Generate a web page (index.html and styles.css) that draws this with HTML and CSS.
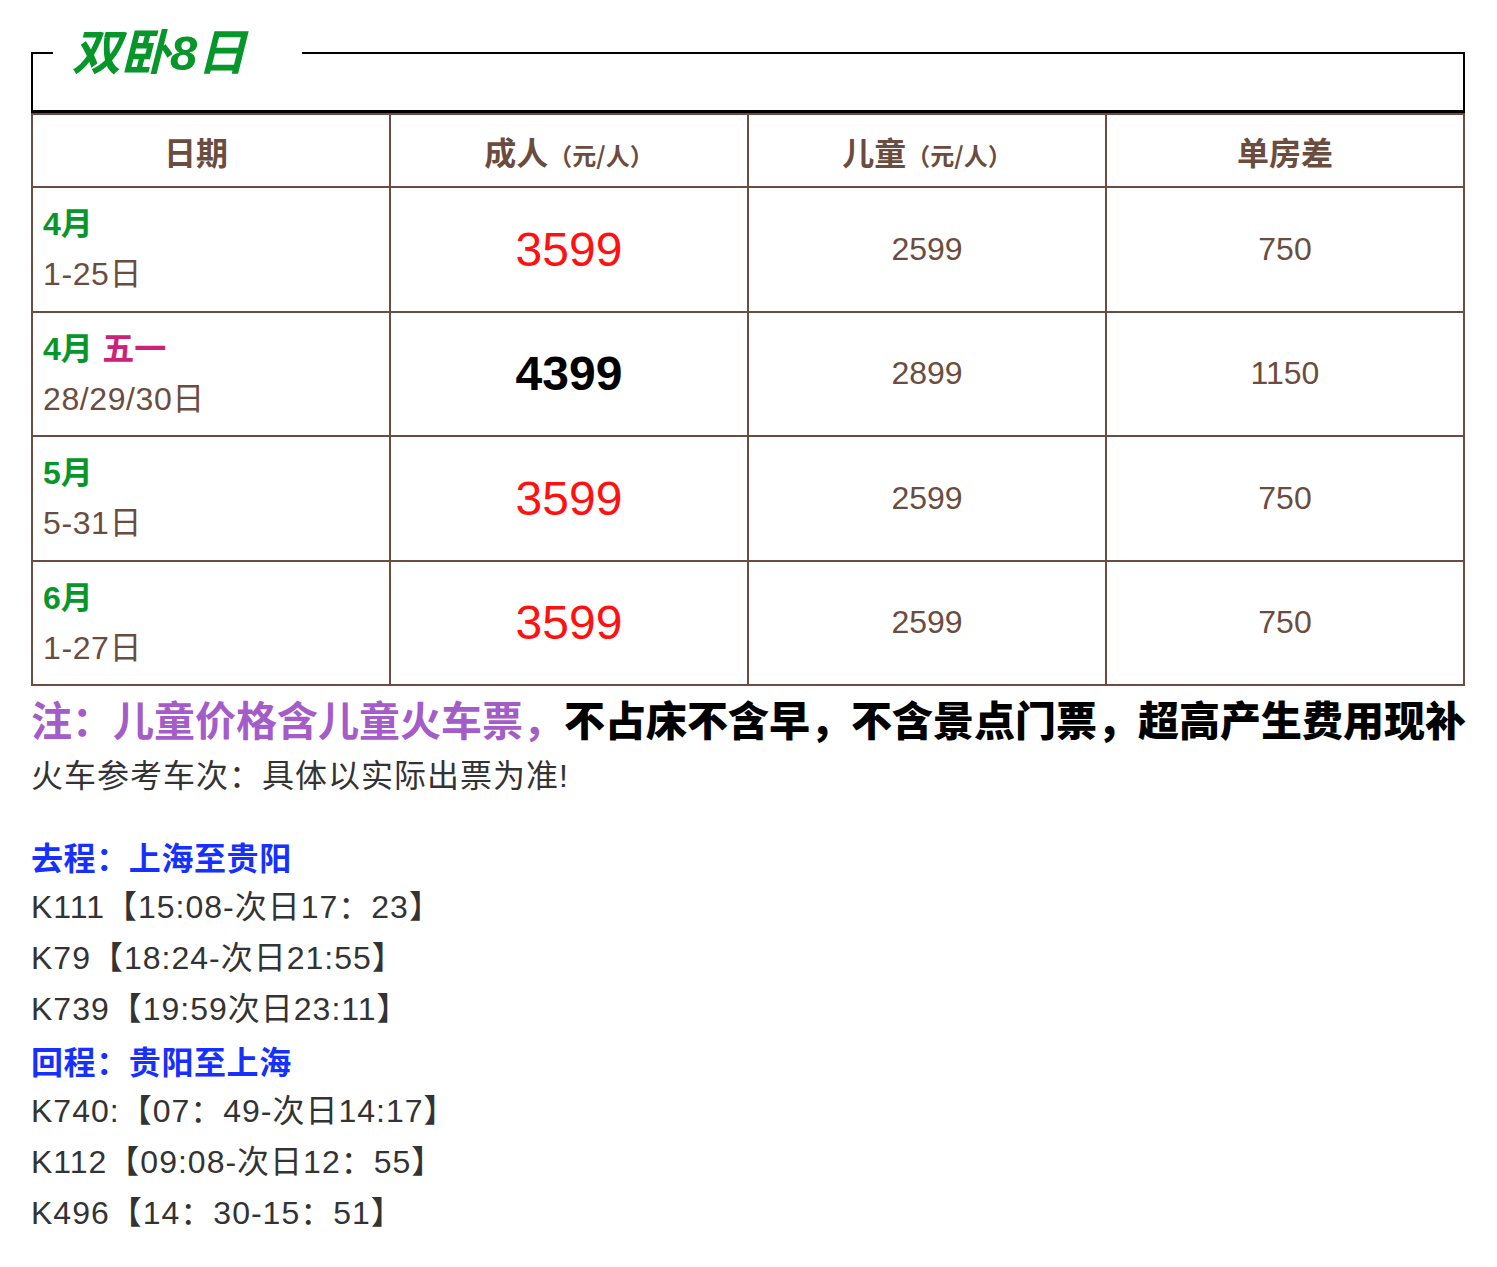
FILE: index.html
```html
<!DOCTYPE html>
<html lang="zh-CN">
<head>
<meta charset="utf-8">
<title>双卧8日</title>
<link rel="stylesheet" href="styles.css">
</head>
<body>
<div class="page">
  <fieldset class="title-box">
    <legend class="title">双卧8日</legend>
    <div class="title-space"></div>
  </fieldset>
  <table class="price">
    <thead>
      <tr>
        <th class="th-date">日期</th>
        <th>成人<span class="unit">（元/人）</span></th>
        <th>儿童<span class="unit">（元/人）</span></th>
        <th>单房差</th>
      </tr>
    </thead>
    <tbody>
      <tr>
        <td class="date"><span class="month">4月</span><br>1-25日</td>
        <td class="adult">3599</td>
        <td class="num">2599</td>
        <td class="num">750</td>
      </tr>
      <tr>
        <td class="date"><span class="month">4月</span> <span class="holiday">五一</span><br>28/29/30日</td>
        <td class="adult peak">4399</td>
        <td class="num">2899</td>
        <td class="num">1150</td>
      </tr>
      <tr>
        <td class="date"><span class="month">5月</span><br>5-31日</td>
        <td class="adult">3599</td>
        <td class="num">2599</td>
        <td class="num">750</td>
      </tr>
      <tr>
        <td class="date"><span class="month">6月</span><br>1-27日</td>
        <td class="adult">3599</td>
        <td class="num">2599</td>
        <td class="num">750</td>
      </tr>
    </tbody>
  </table>
  <p class="note"><span class="note-purple">注：儿童价格含儿童火车票，</span><span class="note-black">不占床不含早，不含景点门票，超高产生费用现补</span></p>
  <p class="hint">火车参考车次：具体以实际出票为准!</p>
  <div class="trains">
    <p class="route">去程：上海至贵阳</p>
    <p class="train">K111【15:08-次日17：23】</p>
    <p class="train">K79【18:24-次日21:55】</p>
    <p class="train">K739【19:59次日23:11】</p>
    <p class="route">回程：贵阳至上海</p>
    <p class="train">K740:【07：49-次日14:17】</p>
    <p class="train">K112【09:08-次日12：55】</p>
    <p class="train">K496【14：30-15：51】</p>
  </div>
</div>
</body>
</html>
```
FILE: styles.css
```css
html, body {
  margin: 0;
  padding: 0;
  background: #ffffff;
}

body {
  font-family: "Liberation Sans", "Noto Sans CJK SC", sans-serif;
  color: #333333;
}

.page {
  width: 1434px;
  padding: 27px 0 0 31px;
}

.title-box {
  margin: 0;
  padding: 0;
  border: 2px solid #000000;
  border-bottom-width: 3px;
  min-width: 0;
}

.title {
  margin-left: 20px;
  width: 249px;
  box-sizing: border-box;
  padding: 0 0 0 19px;
  font-family: "Liberation Sans", "Noto Sans CJK SC", sans-serif;
  font-size: 49px;
  line-height: 52px;
  font-weight: 700;
  font-style: italic;
  color: #07962a;
}

.title-space {
  height: 31px;
}

.price {
  width: 1434px;
  border-collapse: collapse;
  table-layout: fixed;
}

.price th,
.price td {
  border: 2px solid #6b4c3e;
  padding: 0;
}

.price th {
  height: 71px;
  font-family: "Noto Sans CJK SC", sans-serif;
  font-size: 32px;
  font-weight: 700;
  color: #6b4c3e;
  text-align: center;
  vertical-align: middle;
}

.price th.th-date {
  padding-right: 30px;
}

.unit {
  font-size: 24px;
}

.price td {
  height: 122.5px;
  text-align: center;
  vertical-align: middle;
  color: #6b4c3e;
}

.price td.date {
  text-align: left;
  padding-left: 10px;
  font-size: 32px;
  line-height: 50px;
  letter-spacing: 0.6px;
}

.month {
  font-weight: 700;
  font-size: 32px;
  color: #07962a;
  letter-spacing: 0;
}

.holiday {
  font-weight: 700;
  font-size: 32px;
  color: #cc2277;
  letter-spacing: 0;
}

.price td.adult {
  font-size: 48px;
  color: #ff1111;
}

.price td.adult.peak {
  font-weight: 700;
  color: #000000;
}

.price td.num {
  font-size: 32px;
}

.note {
  margin: 0;
  height: 64px;
  line-height: 64px;
  white-space: nowrap;
  font-family: "Noto Sans CJK SC", sans-serif;
  font-weight: 700;
}

.note-purple {
  font-size: 41px;
  color: #a45cc8;
}

.note-black {
  font-size: 41px;
  font-weight: 900;
  color: #000000;
}

.hint {
  margin: 0;
  font-size: 32px;
  line-height: 52px;
  letter-spacing: 1px;
  color: #333333;
}

.trains {
  padding-top: 29px;
}

.route {
  margin: 0;
  font-family: "Noto Sans CJK SC", sans-serif;
  font-size: 32px;
  line-height: 51px;
  letter-spacing: 0.6px;
  font-weight: 700;
  color: #1530ff;
}

.train {
  margin: 0;
  font-size: 32px;
  line-height: 51px;
  letter-spacing: 1px;
  color: #333333;
}
```
